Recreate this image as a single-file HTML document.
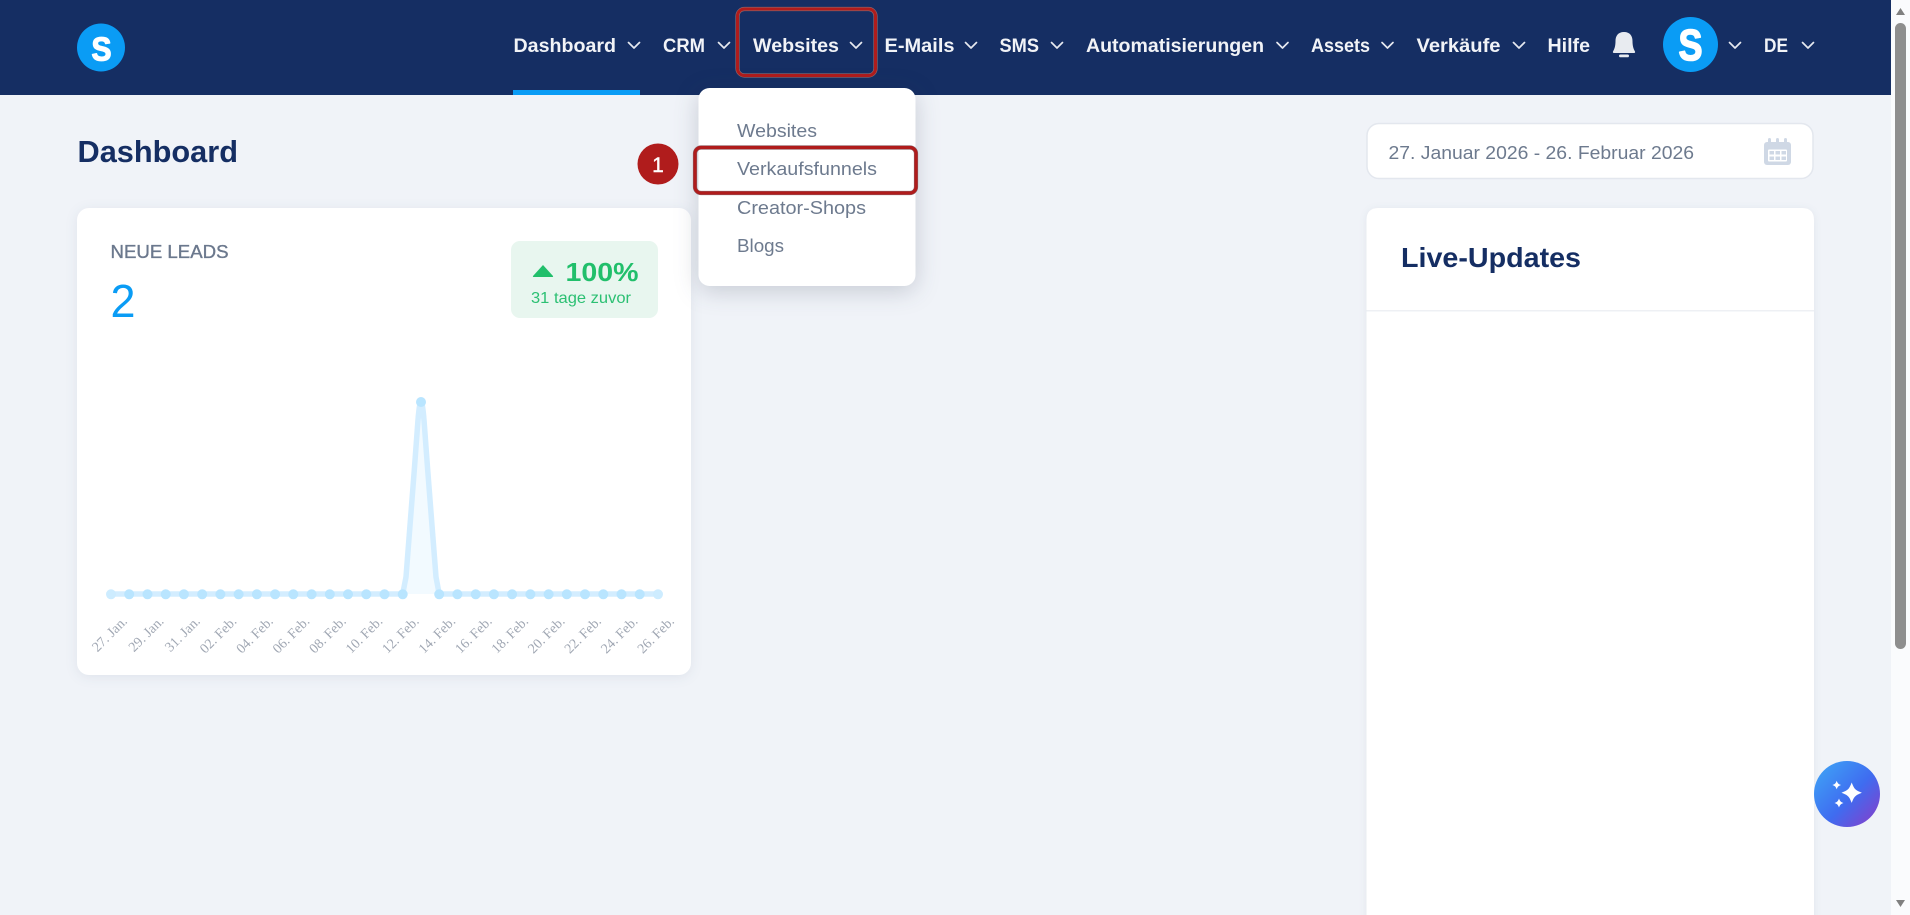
<!DOCTYPE html>
<html lang="de"><head><meta charset="utf-8"><title>Dashboard</title>
<style>
html,body{margin:0;padding:0;width:1910px;height:915px;overflow:hidden;background:#f0f3f8}
svg{display:block;position:absolute;left:0;top:0}
text{font-family:"Liberation Sans",sans-serif}
.nav{font-size:19px;font-weight:700;fill:#f1f3f7}
.chev{fill:none;stroke:#e6e9f0;stroke-width:1.7;stroke-linecap:round;stroke-linejoin:round}
.dd{font-size:18.5px;fill:#6d7a8e}
.xl{font-family:"Liberation Serif",serif;font-size:14px;fill:#a0a7b3}
</style></head><body>
<svg width="1910" height="915" viewBox="0 0 1910 915" xmlns="http://www.w3.org/2000/svg">
<!-- scrollbar -->
<rect x="1891" y="0" width="19" height="915" fill="#fafbfd"/>
<path d="M1900.5 8L1905 15H1896Z" fill="#808080"/>
<rect x="1895" y="23" width="11" height="626" rx="5.5" fill="#8e8e8e"/>
<path d="M1896 900H1905L1900.5 907Z" fill="#808080"/>
<!-- nav -->
<rect x="0" y="0" width="1891" height="95" fill="#152e63"/>
<rect x="513" y="90" width="127" height="5" fill="#0a9cf5"/>
<circle cx="101" cy="47.5" r="24" fill="#0a9cf5"/>
<text x="91.500" y="60.500" font-size="33" font-weight="700" fill="#fff" stroke="#fff" stroke-width="1.300" stroke-linejoin="round" textLength="20" lengthAdjust="spacingAndGlyphs">S</text>
<text class="nav" x="513.5" y="52" textLength="102.5" lengthAdjust="spacingAndGlyphs">Dashboard</text>
<path class="chev" d="M628.5 42.500L634 48L639.500 42.500"/>
<text class="nav" x="663" y="52" textLength="42" lengthAdjust="spacingAndGlyphs">CRM</text>
<path class="chev" d="M718.500 42.500L724 48L729.500 42.500"/>
<text class="nav" x="753" y="52" textLength="86" lengthAdjust="spacingAndGlyphs">Websites</text>
<path class="chev" d="M850.500 42.500L856 48L861.500 42.500"/>
<text class="nav" x="884.500" y="52" textLength="70" lengthAdjust="spacingAndGlyphs">E-Mails</text>
<path class="chev" d="M965.500 42.500L971 48L976.500 42.500"/>
<text class="nav" x="999.500" y="52" textLength="39.500" lengthAdjust="spacingAndGlyphs">SMS</text>
<path class="chev" d="M1051.500 42.500L1057 48L1062.500 42.500"/>
<text class="nav" x="1086" y="52" textLength="178" lengthAdjust="spacingAndGlyphs">Automatisierungen</text>
<path class="chev" d="M1277 42.500L1282.500 48L1288 42.500"/>
<text class="nav" x="1311" y="52" textLength="59" lengthAdjust="spacingAndGlyphs">Assets</text>
<path class="chev" d="M1382 42.500L1387.500 48L1393 42.500"/>
<text class="nav" x="1416.500" y="52" textLength="84" lengthAdjust="spacingAndGlyphs">Verkäufe</text>
<path class="chev" d="M1513.500 42.500L1519 48L1524.500 42.500"/>
<text class="nav" x="1547.500" y="52" textLength="42.500" lengthAdjust="spacingAndGlyphs">Hilfe</text>
<path fill="#e8ebf0" d="M1624 32C1618 32 1615.500 36 1615.500 41C1615.500 46 1614.500 49 1613 51.500Q1612.500 53 1614 53H1634Q1635.500 53 1635 51.500C1633.500 49 1632.500 46 1632.500 41C1632.500 36 1630 32 1624 32Z"/>
<rect x="1619" y="54.500" width="10" height="2.800" rx="1.400" fill="#e8ebf0"/>
<circle cx="1690.500" cy="44.500" r="27.500" fill="#0a9cf5"/>
<text x="1678.500" y="60" font-size="44" font-weight="700" fill="#fff" stroke="#fff" stroke-width="1.600" stroke-linejoin="round" textLength="24" lengthAdjust="spacingAndGlyphs">S</text>
<path class="chev" d="M1729.500 42.500L1735 48L1740.500 42.500"/>
<text class="nav" x="1764" y="52" textLength="24" lengthAdjust="spacingAndGlyphs">DE</text>
<path class="chev" d="M1802.500 42.500L1808 48L1813.500 42.500"/>
<!-- red highlight Websites -->
<rect x="737.500" y="9" width="138" height="66.500" rx="7" fill="none" stroke="#8a6a70" stroke-width="4.200"/>
<rect x="737.500" y="9" width="138" height="66.500" rx="7" fill="none" stroke="#b01c1c" stroke-width="3"/>
<!-- page title -->
<text x="77.500" y="162" font-size="31" font-weight="700" fill="#152e63" textLength="160.500" lengthAdjust="spacingAndGlyphs">Dashboard</text>
<!-- card leads -->
<rect x="77" y="208" width="614" height="467" rx="12" fill="#fff" style="filter:drop-shadow(0 2px 6px rgba(30,50,90,.08))"/>
<text x="110.500" y="258" font-size="18" fill="#6b788d" stroke="#6b788d" stroke-width=".35" textLength="118" lengthAdjust="spacingAndGlyphs">NEUE LEADS</text>
<text x="110.500" y="317" font-size="46" fill="#0a9cf5" textLength="25" lengthAdjust="spacingAndGlyphs">2</text>
<rect x="511" y="241" width="147" height="77" rx="9" fill="#e8f6ef"/>
<path d="M543 265L553 276Q553.500 277 552 277H534Q532.500 277 533 276Z" fill="#21bf6b"/>
<text x="565.500" y="281" font-size="26" font-weight="700" fill="#21bf6b" textLength="73" lengthAdjust="spacingAndGlyphs">100%</text>
<text x="531" y="303" font-size="16" fill="#2cc073" textLength="100" lengthAdjust="spacingAndGlyphs">31 tage zuvor</text>
<!-- chart -->
<path d="M402.700 594L406 577L414.300 470L418 420Q419.500 402 421 402Q422.500 402 424 420L427.700 470L436 577L439.200 594Z" fill="#f2faff"/>
<path d="M111 594H402.700L406 577L414.300 470L418 420Q419.500 402 421 402Q422.500 402 424 420L427.700 470L436 577L439.200 594H658" fill="none" stroke="#d3edff" stroke-width="5.500" stroke-linejoin="round"/>
<g fill="#b9e5ff">
<circle cx="111" cy="594.300" r="5" fill="#cdecff"/><circle cx="129.200" cy="594.300" r="5"/><circle cx="147.500" cy="594.300" r="5"/><circle cx="165.700" cy="594.300" r="5"/><circle cx="183.900" cy="594.300" r="5"/><circle cx="202.200" cy="594.300" r="5"/><circle cx="220.400" cy="594.300" r="5"/><circle cx="238.600" cy="594.300" r="5"/><circle cx="256.900" cy="594.300" r="5"/><circle cx="275.100" cy="594.300" r="5"/><circle cx="293.300" cy="594.300" r="5"/><circle cx="311.600" cy="594.300" r="5"/><circle cx="329.800" cy="594.300" r="5"/><circle cx="348" cy="594.300" r="5"/><circle cx="366.300" cy="594.300" r="5"/><circle cx="384.500" cy="594.300" r="5"/><circle cx="402.700" cy="594.300" r="5"/><circle cx="421" cy="402" r="5"/><circle cx="439.200" cy="594.300" r="5"/><circle cx="457.400" cy="594.300" r="5"/><circle cx="475.700" cy="594.300" r="5"/><circle cx="493.900" cy="594.300" r="5"/><circle cx="512.100" cy="594.300" r="5"/><circle cx="530.400" cy="594.300" r="5"/><circle cx="548.600" cy="594.300" r="5"/><circle cx="566.800" cy="594.300" r="5"/><circle cx="585" cy="594.300" r="5"/><circle cx="603.300" cy="594.300" r="5"/><circle cx="621.500" cy="594.300" r="5"/><circle cx="639.700" cy="594.300" r="5"/><circle cx="658" cy="594.300" r="5" fill="#cdecff"/>
</g>
<g class="xl" text-anchor="end">
<text class="xl" transform="translate(128 622) rotate(-45)">27. Jan.</text>
<text class="xl" transform="translate(164.500 622) rotate(-45)">29. Jan.</text>
<text class="xl" transform="translate(200.900 622) rotate(-45)">31. Jan.</text>
<text class="xl" transform="translate(237.400 622) rotate(-45)">02. Feb.</text>
<text class="xl" transform="translate(273.900 622) rotate(-45)">04. Feb.</text>
<text class="xl" transform="translate(310.300 622) rotate(-45)">06. Feb.</text>
<text class="xl" transform="translate(346.800 622) rotate(-45)">08. Feb.</text>
<text class="xl" transform="translate(383.300 622) rotate(-45)">10. Feb.</text>
<text class="xl" transform="translate(419.700 622) rotate(-45)">12. Feb.</text>
<text class="xl" transform="translate(456.200 622) rotate(-45)">14. Feb.</text>
<text class="xl" transform="translate(492.700 622) rotate(-45)">16. Feb.</text>
<text class="xl" transform="translate(529.100 622) rotate(-45)">18. Feb.</text>
<text class="xl" transform="translate(565.600 622) rotate(-45)">20. Feb.</text>
<text class="xl" transform="translate(602 622) rotate(-45)">22. Feb.</text>
<text class="xl" transform="translate(638.500 622) rotate(-45)">24. Feb.</text>
<text class="xl" transform="translate(675 622) rotate(-45)">26. Feb.</text>
</g>
<!-- dropdown -->
<rect x="698.500" y="88" width="217" height="198" rx="11" fill="#fff" style="filter:drop-shadow(0 5px 12px rgba(30,40,70,.2))"/>
<text class="dd" x="737" y="137" textLength="80" lengthAdjust="spacingAndGlyphs">Websites</text>
<text class="dd" x="737" y="175" textLength="140" lengthAdjust="spacingAndGlyphs">Verkaufsfunnels</text>
<text class="dd" x="737" y="214" textLength="129" lengthAdjust="spacingAndGlyphs">Creator-Shops</text>
<text class="dd" x="737" y="252" textLength="47" lengthAdjust="spacingAndGlyphs">Blogs</text>
<rect x="695" y="147.500" width="221" height="45.500" rx="6" fill="none" stroke="#8a6a70" stroke-width="4.200"/>
<rect x="695" y="147.500" width="221" height="45.500" rx="6" fill="none" stroke="#b01c1c" stroke-width="3.200"/>
<circle cx="658" cy="164" r="20.500" fill="#b01c1c"/>
<text x="658" y="172" font-size="21" fill="#fff" stroke="#fff" stroke-width=".4" text-anchor="middle">1</text>
<!-- date picker -->
<rect x="1367" y="123.500" width="446" height="55" rx="12" fill="#fff" stroke="#e3e7ee" stroke-width="1.500"/>
<text x="1388.500" y="159" font-size="18.500" fill="#6d7a8e" textLength="305.500" lengthAdjust="spacingAndGlyphs">27. Januar 2026 - 26. Februar 2026</text>
<rect x="1764" y="142" width="27" height="23" rx="3" fill="#cfd8e5"/>
<rect x="1768" y="138" width="3" height="6" rx="1.500" fill="#cfd8e5"/><rect x="1776" y="138" width="3" height="6" rx="1.500" fill="#cfd8e5"/><rect x="1784" y="138" width="3" height="6" rx="1.500" fill="#cfd8e5"/>
<rect x="1768" y="149.500" width="19" height="12" rx="1" fill="#fff"/>
<g fill="#cfd8e5"><rect x="1769.500" y="151" width="4.500" height="3.500"/><rect x="1775.500" y="151" width="4.500" height="3.500"/><rect x="1781.500" y="151" width="4.500" height="3.500"/><rect x="1769.500" y="156.500" width="4.500" height="3.500"/><rect x="1775.500" y="156.500" width="4.500" height="3.500"/><rect x="1781.500" y="156.500" width="4.500" height="3.500"/></g>
<!-- live updates card -->
<path d="M1366.500 925V220Q1366.500 208 1378.500 208H1802Q1814 208 1814 220V925Z" fill="#fff" style="filter:drop-shadow(0 1px 4px rgba(30,50,90,.07))"/>
<text x="1401" y="267" font-size="28" font-weight="700" fill="#152e63" textLength="180" lengthAdjust="spacingAndGlyphs">Live-Updates</text>
<rect x="1366.500" y="310" width="447.500" height="1.500" fill="#eef0f4"/>
<!-- fab -->
<defs><linearGradient id="g" x1="0.100" y1="0.150" x2="0.900" y2="0.900"><stop offset="0" stop-color="#3f9bf5"/><stop offset="0.550" stop-color="#3f6cf0"/><stop offset="1" stop-color="#7b45d0"/></linearGradient></defs>
<circle cx="1847" cy="794" r="33" fill="url(#g)"/>
<g fill="#fff">
<path transform="translate(1851.700 792.700) scale(10.200)" d="M0-1C.25-.35.35-.25 1 0C.35.250.25.350 0 1C-.25.350-.35.250-1 0C-.35-.25-.25-.35 0-1Z"/>
<path transform="translate(1836.700 785) scale(4.300)" d="M0-1C.25-.35.35-.25 1 0C.35.250.25.350 0 1C-.25.350-.35.250-1 0C-.35-.25-.25-.35 0-1Z"/>
<path transform="translate(1839 803) scale(4.500)" d="M0-1C.25-.35.35-.25 1 0C.35.250.25.350 0 1C-.25.350-.35.250-1 0C-.35-.25-.25-.35 0-1Z"/>
</g>
</svg>
</body></html>
